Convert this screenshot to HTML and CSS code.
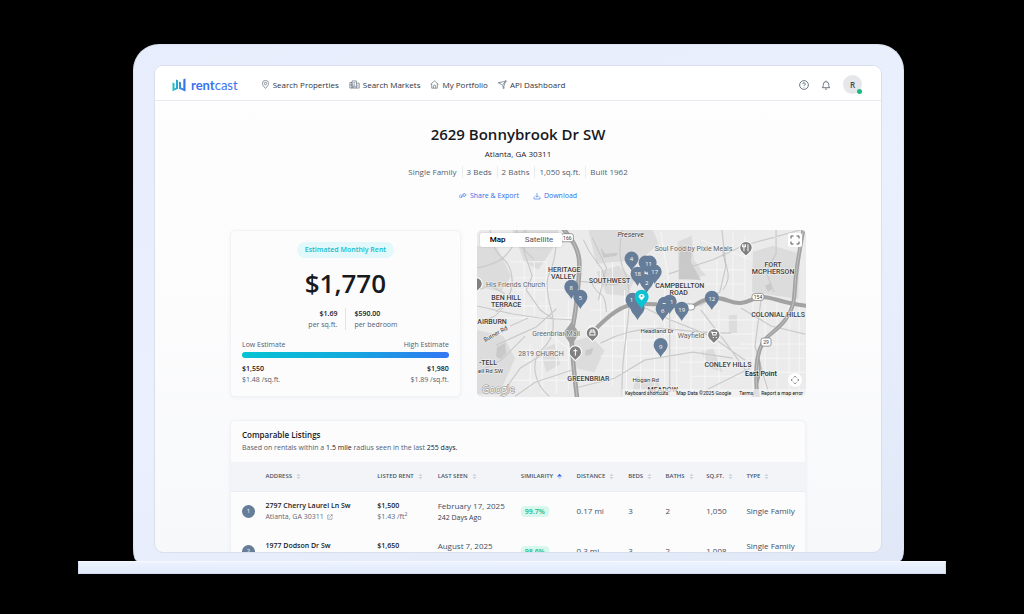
FILE: index.html
```html
<!DOCTYPE html>
<html lang="en">
<head>
<meta charset="utf-8">
<meta name="viewport" content="width=device-width, initial-scale=1">
<title>2629 Bonnybrook Dr SW - RentCast</title>
<link rel="stylesheet" href="styles.css">
</head>
<body>
<svg class="defs" width="0" height="0" aria-hidden="true">
  <symbol id="sort" viewBox="0 0 6 8"><path d="M3 .8 5.4 3.4H.6zM3 7.2.6 4.6h4.8z"/></symbol>
  <symbol id="sort-up" viewBox="0 0 6 8"><path d="M3 .6 6 4H0z"/><path d="M3 7 .9 4.800h4.200z" opacity=".3"/></symbol>
  <symbol id="pin" viewBox="-8 -20 16 20"><path d="M0 0C-1.800-4-7-7.500-7-12.200A7 7 0 0 1 7-12.200C7-7.500 1.800-4 0 0z"/></symbol>
  <symbol id="poi" viewBox="-7 -7 14 16"><path d="M-3.500 5 0 8.500 3.500 5A6.200 6.200 0 1 0-3.500 5z"/></symbol>
</svg>
<div class="laptop">
  <div class="lid">
    <div class="screen">
      <header class="topbar">
        <a class="logo" href="#" aria-label="rentcast">
          <svg viewBox="0 0 14 14" aria-hidden="true">
            <defs><linearGradient id="lg" x1="0" x2="14" y1="0" y2="0" gradientUnits="userSpaceOnUse"><stop offset="0" stop-color="#1cc8c0"/><stop offset=".5" stop-color="#2b9ad8"/><stop offset="1" stop-color="#3b6cf0"/></linearGradient></defs>
            <path fill="url(#lg)" stroke="none" d="M.5 4.500l2 .8v5.200l1.500-.8V1.500l2 .8v8.500l-5.500 2.500zM7 3.500l2 .8v5.200l2.300 1V1.200L13.500.4v13.200L7 10.700z"/>
          </svg>
          <span class="word"><b>rent</b>cast</span>
        </a>
        <nav class="nav">
          <a href="#"><svg class="ico" viewBox="0 0 16 16" aria-hidden="true"><path d="M8 15C5 11.500 2.500 9 2.500 6.200a5.500 5.500 0 0 1 11 0C13.500 9 11 11.500 8 15z"/><circle cx="8" cy="6.300" r="2.200"/></svg>Search Properties</a>
          <a href="#"><svg class="ico wide" viewBox="0 0 20 16" aria-hidden="true"><path d="M1.500 14.500V4.500h4v10M5.500 14.500V1.500h8v13M13.500 5.500h5v9h-17M8 4.500h3M8 7.500h3M8 14v-3.500h3V14M16 8.500v3M3.500 7v4"/></svg>Search Markets</a>
          <a href="#"><svg class="ico" viewBox="0 0 16 16" aria-hidden="true"><path d="M1 8l7-6.500L15 8M3 6.500v8h10v-8M6 14.500V11a2 2 0 0 1 4 0v3.500"/></svg>My Portfolio</a>
          <a href="#"><svg class="ico" viewBox="0 0 16 16" aria-hidden="true"><path d="M13 3 10 12.500M12.500 3.500 8 9l1.500 4M12 2.500 3 4.500M3 6l4 2.500"/><circle cx="13.500" cy="2.200" r="1.300"/><circle cx="2" cy="5" r="1.200"/><circle cx="10" cy="14" r="1.200"/></svg>API Dashboard</a>
        </nav>
        <div class="tools">
          <button type="button" aria-label="Help"><svg viewBox="0 0 16 16"><circle cx="8" cy="8" r="7"/><path d="M6 6.500a2 2 0 1 1 3 1.600c-.7.400-1 .7-1 1.400M8 11v1"/></svg></button>
          <button type="button" aria-label="Notifications"><svg viewBox="0 0 16 16"><path d="M8 1v1.200M2 12.300c1.500-1.300 1.700-3 1.700-5.300a4.300 4.300 0 0 1 8.600 0c0 2.300.2 4 1.700 5.300zM6.300 14.500h3.400"/></svg></button>
          <button type="button" class="avatar" aria-label="Account">R<i></i></button>
        </div>
      </header>

      <main class="content">
        <section class="hero">
          <h1>2629 Bonnybrook Dr SW</h1>
          <p class="city">Atlanta, GA 30311</p>
          <ul class="facts"><li>Single Family</li><li>3 Beds</li><li>2 Baths</li><li>1,050 sq.ft.</li><li>Built 1962</li></ul>
          <div class="actions">
            <a href="#"><svg viewBox="0 0 16 16" aria-hidden="true"><path d="M10 2.500 14.500 6 10 9.500V7.500C7 7.500 5.500 9 5 11.500 4.500 7 6.500 4.500 10 4.500zM4 4.500A5 5 0 0 0 2.500 12"/></svg>Share &amp; Export</a>
            <a href="#"><svg viewBox="0 0 16 16" aria-hidden="true"><path d="M8 2v8M5 7.500 8 10.500l3-3M4 9 2 11v3h12v-3l-2-2"/></svg>Download</a>
          </div>
        </section>

        <section class="summary">
          <article class="card estimate">
            <span class="pill">Estimated Monthly Rent</span>
            <strong class="price">$1,770</strong>
            <div class="per">
              <div><b>$1.69</b><span>per sq.ft.</span></div>
              <div><b>$590.00</b><span>per bedroom</span></div>
            </div>
            <div class="range">
              <div class="ends"><span>Low Estimate</span><span>High Estimate</span></div>
              <div class="bar"></div>
              <div class="ends strong"><b>$1,550</b><b>$1,980</b></div>
              <div class="ends"><span>$1.48 /sq.ft.</span><span>$1.89 /sq.ft.</span></div>
            </div>
          </article>

          <div class="map">
            <svg class="canvas" viewBox="477 230 328 167" preserveAspectRatio="xMidYMid slice" role="img" aria-label="Map of nearby rentals">
              <rect x="470" y="225" width="345" height="180" fill="#ebebeb"/>
              <g fill="#dcdcdc">
                <path d="M477 246l20 2 14 28-10 16-24-6zM512 230h46l-2 14-18 26-14-8zM477 330l26 6 12 22-16 36h-22zM572 342l18-6 14 14-10 22-18-4zM588 230h64l6 14-18 16-44 4zM677 242l14-6 2 24 12 16-27 4zM752 252l20-6 27 8-2 45-46-7zM596 272l22-6 16 14-8 16-20-2zM540 350l14-6 6 20-14 8zM700 352l12-4 10 24-12-4zM728 315h8v18h-8zM636 376l22 4 4 17h-32z"/>
              </g>
              <g fill="#c9c9c9"><path d="M679 246l12 2-1 14 10 18-22-1zM497 347l8-4 1 10-6 6-4-3zM600 248l5 6 12-1-1 3-13 2zM764 286l5-3 2 6-4 3zM585 350l8-2-2 6-6 2z"/></g>
              <g fill="none" stroke="#f7f7f7" stroke-width=".9">
                <path d="M510 262h36v70M514 278h50M516 290h48M524 262v60M534 262v54M500 306h54M506 318h66M545 332l26 18M520 350h36M524 360h44M530 344v44M542 334v60M556 336v58M568 300v90M512 380h56M600 270v50M612 262v60M624 290v54M590 310h60M588 326h70M604 340h64M612 326v60M626 340v56M640 330v60M654 320v76M600 356h70M604 370h76M664 280v116M676 290v106M690 300v96M704 306v90M718 310v86M660 320h100M664 334h90M670 348h80M680 362h64M690 376h50M732 232v68M744 236v60M700 270h44M704 284h40M716 260v40M752 300v94M764 304v90M776 300v94M788 306v90M798 300v94M750 316h54M740 344h64M746 358h58M752 372h52M700 240l50 20M660 232l10 60"/>
              </g>
              <g fill="none" stroke="#cacaca" stroke-width="1.200">
                <path d="M477 268q22-4 30-14t18-24M490 230q2 20 12 28t10 24-16 30M526 230l-2 22 8 24-6 14 14 20 14 10M556 244q-2 20-7 30t2 36-10 40q-8 8-6 22t14 24M477 306l36 8 26 4 36 2M510 326l18-8M496 345l40-18 20-18M477 372l24-12 24-24M500 396l20-28 26-16M571 370l-36 12-20 14M622 230q-6 26 2 42t2 60-4 66M592 238l14 30-8 32M574 388l40-10 30-18 48-8 40 6M640 306l30 14 40 16 34 24M669 312v85M700 310l26 34 20 28M668 274l44-14 30-14 58-16M721 230l4 36-6 26-20 14M760 300l-6 46 14 48M740 308l30 18 34 8M600 343q34-18 70-14t60 4M575 281l40 4 20-8M775 230v24l-10 18 8 20M477 290l14-4 14 8M705 390l44-22"/>
              </g>
              <g fill="none" stroke="#b9b9b9" stroke-width=".8"><path d="M481 322l14-6 14-14M583 240l6 12 13 18 4 16M590 280q5 12 10 14t6 18M722 290q8-10 4-22t-4-18M516 230l6 18 12 12"/></g>
              <g fill="none" stroke-linecap="round" stroke="#a2a2a2">
                <path stroke-width="4.500" d="M562 228C572 240 579 250 579 264S576 312 571 333Q572 360 577 400"/>
                <path stroke-width="4" d="M592 332C604 320 616 308 630 305S668 306 688 307C696 306 700 299 712 298S730 304 740 303 752 297 762 297 782 304 808 306"/>
                <path stroke-width="4" d="M803 226C798 252 795 268 794 284S793 308 784 320 766 334 761 344 753 372 757 400"/>
                <path stroke-width="2" d="M757 356C762 372 756 384 751 400"/>
              </g>
              <g fill="none" stroke="#cfcfcf" stroke-width=".7"><path d="M562 228C572 240 579 250 579 264S576 312 571 333Q572 360 577 400M803 226C798 252 795 268 794 284S793 308 784 320 766 334 761 344 753 372 757 400"/></g>
              <path fill="#a2a2a2" d="M571 322l8 11-8 13-8-13z"/>
              <g fill="#fff" stroke="#777" stroke-width=".7"><rect x="561" y="234" width="12" height="8" rx="2"/><rect x="751" y="293.500" width="12" height="7" rx="3"/><rect x="760" y="338" width="10" height="8" rx="2"/><rect x="684" y="304" width="10" height="6" rx="3"/></g>
              <g class="shield"><text x="567" y="240">166</text><text x="757" y="299">154</text><text x="765" y="344">29</text></g>
              <g stroke="#fff" stroke-width="1" fill="#808080">
                <use href="#poi" x="-7" y="-7" width="14" height="16" transform="translate(592 333)"/>
                <use href="#poi" x="-7" y="-7" width="14" height="16" transform="translate(575 352)"/>
                <use href="#poi" x="-7" y="-7" width="14" height="16" transform="translate(745 248)"/>
                <use href="#poi" x="-7" y="-7" width="14" height="16" transform="translate(713 335)"/>
                <use href="#poi" x="-7" y="-7" width="14" height="16" transform="translate(476 284)"/>
              </g>
              <g fill="none" stroke="#fff" stroke-width="1"><path d="M589.500 332h5v3h-5zM590.500 331.500v-1.500h3v1.500M575 348.500v7M573 350.500h4M743 244.500v7M741.500 244.500v2.500h3v-2.500M747 251.500v-7M710 332h1.200l.8 3h3l.8-2.500h-4M712 337.500h1M715 337.500h1"/></g>
              <g class="area">
                <text x="564" y="272">HERITAGE</text><text x="563" y="279">VALLEY</text><text x="609" y="283">SOUTHWEST</text>
                <text x="506" y="300">BEN HILL</text><text x="506" y="307">TERRACE</text><text x="492" y="324">AIRBURN</text><text x="488" y="365">-TELL</text>
                <text x="588" y="381">GREENBRIAR</text><text x="679" y="288">CAMPBELLTON</text><text x="678" y="295">ROAD</text>
                <text x="772" y="267">FORT</text><text x="772" y="274">MCPHERSON</text><text x="777" y="317">COLONIAL HILLS</text><text x="727" y="367">CONLEY HILLS</text><text x="662" y="392">MEADOW</text>
              </g>
              <g class="place">
                <text x="486" y="287">His Friends Church</text><text x="532" y="336">Greenbriar Mall</text><text x="518" y="356">2819 CHURCH</text>
                <text x="654" y="251">Soul Food by Pixie Meals</text><text x="677" y="338">Wayfield</text>
              </g>
              <g class="road"><text class="park" x="617" y="237">Preserve</text><text x="640" y="333">Headland Dr</text><text x="632" y="382">Hogan Rd</text><text x="478" y="373">ell Rd SW</text><text transform="translate(485 342) rotate(-29)">Butner Rd</text></g>
              <text class="town" x="744" y="376">East Point</text>
              <text class="google" x="482" y="393">Google</text>
              <g fill="#667d99">
                <use href="#pin" x="-8" y="-20" width="16" height="20" transform="translate(631 271)"/>
                <use href="#pin" x="-8" y="-20" width="16" height="20" transform="translate(645 275)"/>
                <use href="#pin" x="-8" y="-20" width="16" height="20" transform="translate(649 275)"/>
                <use href="#pin" x="-8" y="-20" width="16" height="20" transform="translate(654 284)"/>
                <use href="#pin" x="-8" y="-20" width="16" height="20" transform="translate(637 286)"/>
                <use href="#pin" x="-8" y="-20" width="16" height="20" transform="translate(646 293)"/>
                <use href="#pin" x="-8" y="-20" width="16" height="20" transform="translate(571 299)"/>
                <use href="#pin" x="-8" y="-20" width="16" height="20" transform="translate(580 309)"/>
                <use href="#pin" x="-8" y="-20" width="16" height="20" transform="translate(632 312)"/>
                <use href="#pin" x="-8" y="-20" width="16" height="20" transform="translate(637 320)"/>
                <use href="#pin" x="-8" y="-20" width="16" height="20" transform="translate(669 314)"/>
                <use href="#pin" x="-8" y="-20" width="16" height="20" transform="translate(664 316)"/>
                <use href="#pin" x="-8" y="-20" width="16" height="20" transform="translate(662 321)"/>
                <use href="#pin" x="-8" y="-20" width="16" height="20" transform="translate(681 321)"/>
                <use href="#pin" x="-8" y="-20" width="16" height="20" transform="translate(711 310)"/>
                <use href="#pin" x="-8" y="-20" width="16" height="20" transform="translate(660 357)"/>
              </g>
              <path fill="#e6ebf0" d="M644 271l4 4-4-1zM662 303h3v1h-3z"/>
              <g class="num">
                <text x="631" y="261">4</text><text x="648" y="266">11</text><text x="654" y="274">17</text><text x="637" y="276">18</text><text x="646" y="285">2</text><text x="571" y="290">8</text><text x="580" y="300">5</text><text x="631" y="302">1</text><text x="671" y="304">1</text><text x="662" y="313">6</text><text x="681" y="312">19</text><text x="711" y="301">12</text><text x="660" y="349">9</text>
              </g>
              <use href="#pin" x="-8" y="-20" width="16" height="20" transform="translate(641 309)" fill="#0bc3d3"/>
              <path fill="#fff" d="M641 300.500l-3-3.500a3 3 0 1 1 6 0z"/><circle cx="641" cy="296" r="1" fill="#0bc3d3"/>
            </svg>
            <div class="maptype"><button type="button" class="on">Map</button><button type="button">Satellite</button></div>
            <button type="button" class="ctl full" aria-label="Full screen"><svg viewBox="0 0 12 12"><path d="M2 4.500V2h2.500M7.500 2H10v2.500M10 7.500V10H7.500M4.500 10H2V7.500"/></svg></button>
            <button type="button" class="ctl move" aria-label="Map controls"><svg viewBox="0 0 12 12"><path d="M4.500 3 6 1.500 7.500 3M9 4.500 10.500 6 9 7.500M7.500 9 6 10.500 4.500 9M3 7.500 1.500 6 3 4.500"/></svg></button>
            <div class="legal"><button type="button">Keyboard shortcuts</button><span>Map Data ©2025 Google</span><a href="#">Terms</a><a href="#">Report a map error</a></div>
          </div>
        </section>

        <section class="card listings">
          <div class="intro">
            <h2>Comparable Listings</h2>
            <p>Based on rentals within a <b>1.5 mile</b> radius seen in the last <b>255 days.</b></p>
          </div>
          <table>
            <colgroup><col class="c0"><col class="c1"><col class="c2"><col class="c3"><col class="c4"><col class="c5"><col class="c6"><col class="c7"><col class="c8"><col class="c9"></colgroup>
            <thead><tr>
              <th></th>
              <th>ADDRESS<svg><use href="#sort"/></svg></th><th>LISTED RENT<svg><use href="#sort"/></svg></th><th>LAST SEEN<svg><use href="#sort"/></svg></th><th>SIMILARITY<svg class="active"><use href="#sort-up"/></svg></th><th>DISTANCE<svg><use href="#sort"/></svg></th><th>BEDS<svg><use href="#sort"/></svg></th><th>BATHS<svg><use href="#sort"/></svg></th><th>SQ.FT.<svg><use href="#sort"/></svg></th><th>TYPE<svg><use href="#sort"/></svg></th>
            </tr></thead>
            <tbody>
              <tr>
                <td><span class="dot">1</span></td>
                <td><b>2797 Cherry Laurel Ln Sw</b><small>Atlanta, GA 30311 <svg viewBox="0 0 12 12"><path d="M5 2H1.500v8.500H10V7M7 1.500h3.500V5M10.500 1.500 5 7"/></svg></small></td>
                <td><b>$1,500</b><small>$1.43 /ft<sup>2</sup></small></td>
                <td>February 17, 2025<small class="dark">242 Days Ago</small></td>
                <td><span class="match">99.7%</span></td>
                <td>0.17 mi</td><td>3</td><td>2</td><td>1,050</td><td>Single Family</td>
              </tr>
              <tr>
                <td><span class="dot">2</span></td>
                <td><b>1977 Dodson Dr Sw</b><small>Atlanta, GA 30311 <svg viewBox="0 0 12 12"><path d="M5 2H1.500v8.500H10V7M7 1.500h3.500V5M10.500 1.500 5 7"/></svg></small></td>
                <td><b>$1,650</b><small>$1.64 /ft<sup>2</sup></small></td>
                <td>August 7, 2025<small class="dark">71 Days Ago</small></td>
                <td><span class="match">98.6%</span></td>
                <td>0.3 mi</td><td>3</td><td>2</td><td>1,008</td><td>Single Family<small>&nbsp;</small></td>
              </tr>
            </tbody>
          </table>
        </section>
      </main>
    </div>
  </div>
  <div class="base"></div>
</div>
</body>
</html>
```

FILE: styles.css
```css
* { box-sizing: border-box; }
body { margin: 0; background: #000; color: #1d2129; font: 7px/12px "Open Sans", "Noto Sans", sans-serif; }
h1, h2, p, ul { margin: 0; padding: 0; }
a { color: inherit; text-decoration: none; }
button { font: inherit; color: inherit; border: 0; padding: 0; background: none; }
svg { fill: none; stroke: currentColor; flex: none; }
b { font-weight: 600; }
.defs { position: absolute; }

.laptop { height: 100vh; padding: 44px 78px 40px; display: flex; flex-direction: column; }
.lid { flex: 1; min-height: 0; margin: 0 42px 0 55px; padding: 20px 21px 8px 20px; background: linear-gradient(160deg, #e7edfc, #ebf0fe 50%, #e0e8f7); border: 1px solid #dce4f3; border-bottom: 0; border-radius: 26px 26px 4px 4px / 26px 26px 12px 12px; }
.base { height: 13px; background: linear-gradient(#edf3ff, #e2eaf9); border: 1px solid #d2dcee; border-top-color: #f5f8ff; }
.screen { height: 100%; overflow: hidden; background: linear-gradient(#fefefe, #fcfcfd 50%, #f7f8fa); border: 1px solid #d9e0eb; border-radius: 9px; }

.topbar { height: 35px; padding: 3px 19px 0 17px; display: flex; align-items: center; border-bottom: 1px solid #e9ebf0; background: #fff; }
.logo { display: flex; align-items: center; gap: 5px; margin-right: 23px; color: #3c72ee; }
.logo svg { width: 14px; height: 14px; }
.word { font: 400 13px/14px Lato, sans-serif; }
.word b { font-weight: 700; }
.nav { display: flex; gap: 10px; color: #2c3340; font-size: 8px; font-weight: 500; }
.nav a { display: flex; align-items: center; gap: 3px; }
.ico { width: 9px; height: 9px; stroke-width: 1.2; color: #5c6879; }
.ico.wide { width: 11px; }
.tools { margin-left: auto; display: flex; align-items: center; gap: 12px; color: #4d5a6b; }
.tools svg { display: block; width: 10px; height: 10px; stroke-width: 1.3; }
.tools .avatar { position: relative; width: 19px; height: 19px; border-radius: 50%; background: #e6e7ea; color: #414b5a; font-size: 8px; font-weight: 600; }
.avatar i { position: absolute; right: 0; bottom: 0; width: 5px; height: 5px; border-radius: 50%; background: #16b981; }

.content { margin: 0 75px; }
.hero { padding-top: 21px; display: flex; flex-direction: column; align-items: center; }
h1 { font-size: 15px; line-height: 24px; font-weight: 600; color: #17191e; }
.city { margin-top: 1px; font-size: 8px; line-height: 14px; }
.facts { margin-top: 5px; display: flex; list-style: none; color: #535e70; font-size: 8px; }
.facts li + li { margin-left: 5px; padding-left: 4px; border-left: 1px solid #e9ecf1; }
.actions { margin-top: 12px; display: flex; gap: 14px; color: #2d6fe8; }
.actions a { display: flex; align-items: center; gap: 3px; }
.actions svg { width: 8px; height: 8px; stroke-width: 1.2; }

.summary { margin-top: 28px; display: grid; grid-template-columns: 230fr 328fr; gap: 16px; }
.card { background: #fcfcfd; border: 1px solid #f0f2f5; border-radius: 5px; box-shadow: 0 1px 4px #1c2a440c; }
.estimate { padding: 11px; display: flex; flex-direction: column; align-items: center; }
.pill { padding: 1px 8px; line-height: 14px; border-radius: 8px; background: #e2f8fb; color: #14bccb; font-weight: 600; }
.price { margin-top: 8px; font-size: 26px; line-height: 34px; font-weight: 600; color: #17191e; }
.per { align-self: stretch; margin-top: 8px; display: grid; grid-template-columns: 1fr 1fr; color: #535e70; line-height: 11px; }
.per div { display: flex; flex-direction: column; padding: 0 8px; }
.per div:first-child { align-items: flex-end; }
.per div + div { border-left: 1px solid #dfe3ea; }
.per b, .strong b { color: #17191e; }
.range { align-self: stretch; margin-top: 9px; color: #535e70; line-height: 11px; }
.ends { display: flex; justify-content: space-between; }
.bar { height: 6px; margin: 2px 0 5px; border-radius: 3px; background: linear-gradient(90deg, #06c3d2, #12aadd 50%, #3377f2); }

.map { position: relative; overflow: hidden; border-radius: 5px; }
.canvas { position: absolute; width: 100%; height: 100%; stroke: none; font-family: Roboto, sans-serif; }
.canvas text { stroke: #f4f4f4; stroke-width: 1px; paint-order: stroke; }
.area { font-size: 7px; font-weight: 500; fill: #3c3c3c; text-anchor: middle; }
.place { font-size: 7px; fill: #666; }
.road { font-size: 6px; fill: #333; }
.road .park { font-size: 7px; font-style: italic; }
.town { font-size: 7px; font-weight: 500; fill: #222; }
.canvas .google { font: 500 10px "Open Sans", sans-serif; fill: #fff; stroke: #8b8b8b; }
.canvas .num text, .canvas .shield text { stroke: none; }
.num { font: 6px "Open Sans", sans-serif; fill: #fff; text-anchor: middle; }
.shield { font-size: 5px; fill: #333; text-anchor: middle; }
.maptype { position: absolute; top: 3px; left: 3px; display: flex; background: #fff; border-radius: 2px; box-shadow: 0 0 2px #0003; font: 8px/14px Roboto, sans-serif; color: #555; }
.maptype button { padding: 0 9px; }
.maptype .on { padding: 0 10px; color: #000; font-weight: 500; }
.ctl { position: absolute; right: 4px; width: 14px; height: 14px; background: #fff; color: #555; border-radius: 2px; display: grid; place-items: center; }
.ctl svg { width: 12px; height: 12px; stroke-width: 1; }
.full { top: 3px; }
.move { bottom: 10px; border-radius: 50%; }
.move svg { width: 10px; height: 10px; }
.legal { position: absolute; right: 0; bottom: 0; padding: 0 3px; display: flex; gap: 8px; background: #f5f5f5b0; color: #111; font: 5px/8px Roboto, sans-serif; }

.listings { margin-top: 23px; }
.intro { padding: 7px 11px 8px; color: #535e70; }
.intro b { font-weight: 500; color: #17191e; }
h2 { font-size: 8px; line-height: 14px; font-weight: 600; color: #17191e; }
table { width: 100%; table-layout: fixed; border-collapse: collapse; color: #444e60; font-size: 8px; }
.c0 { width: 6%; } .c1 { width: 19.500%; } .c2 { width: 10.500%; } .c3 { width: 14.500%; } .c4 { width: 9.700%; }
.c5 { width: 9%; } .c6 { width: 6.500%; } .c7 { width: 7.100%; } .c8 { width: 7%; } .c9 { width: 10.200%; }
th, td { padding: 0; text-align: left; white-space: nowrap; }
th:first-child, td:first-child { padding-left: 11px; }
th { height: 29px; font-size: 6px; font-weight: 600; color: #4a5567; }
th svg { width: 5px; height: 7px; margin-left: 4px; vertical-align: middle; fill: #ccd3de; stroke: none; }
th .active { fill: #3566ec; }
thead tr { background: #f2f4f8; border-bottom: 1px solid #e8ebf2; }
td { height: 40px; }
td b { display: block; color: #17191e; font-size: 7px; line-height: 11px; }
small { display: block; font-size: 7px; line-height: 11px; color: #5c6779; }
small svg { width: 6px; height: 6px; vertical-align: middle; margin-left: 1px; }
small.dark { color: #343c4a; }
sup { font-size: 5px; line-height: 0; }
.dot { display: block; width: 13px; height: 13px; border-radius: 50%; background: #667d99; color: #fff; line-height: 13px; text-align: center; font-size: 6px; }
.match { display: inline-block; padding: 0 4px; font-size: 7px; line-height: 11px; border-radius: 4px; background: #d8f8ee; color: #14b98b; font-weight: 600; }
```
